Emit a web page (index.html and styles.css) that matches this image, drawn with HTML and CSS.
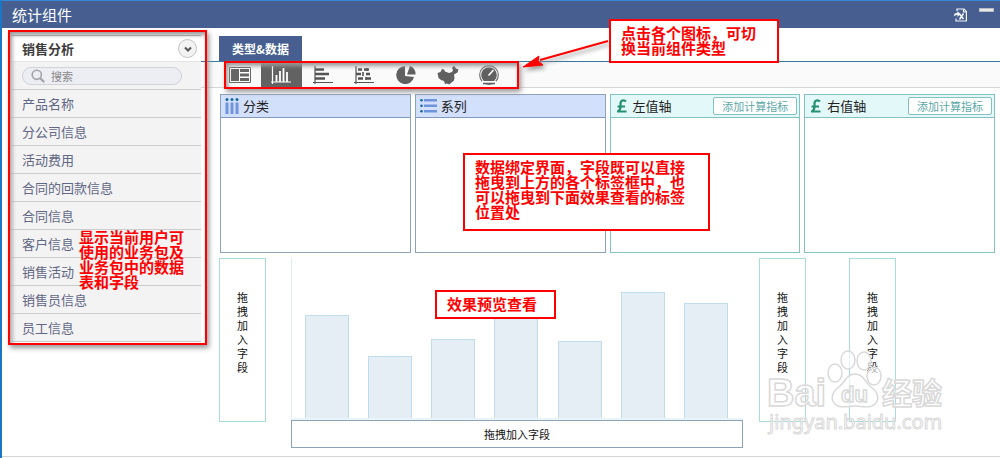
FILE: index.html
```html
<!DOCTYPE html>
<html lang="zh-CN">
<head>
<meta charset="utf-8">
<title>统计组件</title>
<link rel="stylesheet" href="styles.css">
</head>
<body>
<div class="app">
  <header class="titlebar">
    <h1 class="title">统计组件</h1>
    <button class="title-btn" type="button" aria-label="导出">
      <svg width="14" height="14" viewBox="0 0 14 14" fill="none" stroke="#f2f4f8" stroke-width="1.2"><path d="M4 3V1h7l2.400 2.400V13H3v-2.500M10.500 1v3H13"/><path d="M0.800 8.500C1 5.500 2.500 4.800 4.500 4.800V3l3 3-3 3V7C2.800 7 1.800 7.500.8 8.500z" fill="#f2f4f8" stroke="none"/><path d="M6.500 6l4 5M10.500 5.500l-4 6" stroke-width="1.600"/></svg>
    </button>
    <button class="title-btn minimize" type="button" aria-label="最小化"><span class="dash"></span></button>
  </header>

  <div class="workspace">
    <aside class="sidebar">
      <div class="package">
        <h2 class="package-name">销售分析</h2>
        <button class="collapse" type="button" aria-label="展开">
          <svg width="8" height="8" viewBox="0 0 8 8" fill="none" stroke="#555" stroke-width="2"><path d="M1 2.500L4 5.500l3-3"/></svg>
        </button>
      </div>
      <div class="search-row">
        <label class="search">
          <svg width="14" height="14" viewBox="0 0 14 14" fill="none" stroke="#a4a4a8"><circle cx="5.800" cy="5.800" r="4.600" stroke-width="1.600"/><path d="M9.500 9.500l3 3" stroke-width="2.400" stroke-linecap="round"/></svg>
          <input class="search-input" type="text" placeholder="搜索" aria-label="搜索">
        </label>
      </div>
      <ul class="tables">
        <li class="table-item">产品名称</li>
        <li class="table-item">分公司信息</li>
        <li class="table-item">活动费用</li>
        <li class="table-item">合同的回款信息</li>
        <li class="table-item">合同信息</li>
        <li class="table-item">客户信息</li>
        <li class="table-item">销售活动</li>
        <li class="table-item">销售员信息</li>
        <li class="table-item">员工信息</li>
      </ul>
    </aside>

    <main class="main">
      <nav class="tabs"><button class="tab" type="button">类型&amp;数据</button></nav>
      <div class="toolbar">
        <button class="tool" type="button" aria-label="表格">
          <svg width="22" height="20" viewBox="0 0 22 20"><path d="M.5 2.500h21v15H.5z" fill="#fff" stroke="#666"/><path d="M2 4h8v12H2zM11 4h9v3h-9zM11 8.500h9v3h-9zM11 13h9v3h-9z" fill="#666"/></svg>
        </button>
        <button class="tool active" type="button" aria-label="柱状图" aria-pressed="true">
          <svg width="22" height="20" viewBox="0 0 22 20" fill="none" stroke="#fff"><path d="M1 17h20M2.500 1v18" stroke-width="1.200"/><path d="M6.500 10v7M10 6v11M13.500 3v14M17 7v10" stroke-width="1.800"/></svg>
        </button>
        <button class="tool" type="button" aria-label="条形图">
          <svg width="22" height="20" viewBox="0 0 22 20" fill="none" stroke="#555"><path d="M1 17.500h20M3 1v18" stroke-width="1.200"/><path d="M3 4.500h9M3 9h14M3 13.500h10" stroke-width="2.400"/></svg>
        </button>
        <button class="tool" type="button" aria-label="组合图">
          <svg width="22" height="20" viewBox="0 0 22 20" fill="none" stroke="#555"><path d="M1 17.500h20M3 1v18" stroke-width="1.200"/><path d="M5 4.500h4m2 0h5M3 9h5m5 0h4M5 13.500h5m3 0h5" stroke-width="2.600"/><path d="M10 7v4M14 3v3M13 12v3" stroke-width="1.600"/></svg>
        </button>
        <button class="tool" type="button" aria-label="饼图">
          <svg width="22" height="20" viewBox="0 0 22 20" fill="#606060"><path d="M10 1a9 9 0 1 0 9 11l-9-1z"/><path d="M12 9.500L15 .8a9 9 0 0 1 5.500 8.700z"/></svg>
        </button>
        <button class="tool" type="button" aria-label="地图">
          <svg width="22" height="20" viewBox="0 0 22 20" fill="#606060"><path d="M.5 8l3-1 1.500-3 2 .5 1 2 4 1.500 3-1 1-2-1-2 2-2.500 2 3 2.500 1-1 3-3.500 2 .5 3-.5 3-3 2.500-2 1.500-2-1-2 .5-1-3-3-1-2.500-2z"/></svg>
        </button>
        <button class="tool" type="button" aria-label="仪表盘">
          <svg width="22" height="20" viewBox="0 0 22 20"><circle cx="11" cy="10" r="9.300" fill="#fff" stroke="#707070" stroke-width="1.200"/><circle cx="11" cy="10" r="7.800" fill="#606060"/><path d="M10.500 10.500l5-5.500" stroke="#fff" stroke-width="1.600"/><path d="M4 17.500h14" stroke="#fff" stroke-width="3"/><path d="M5 18.500h12" stroke="#606060" stroke-width="1.600"/></svg>
        </button>
      </div>

      <section class="fields">
        <div class="field">
          <div class="field-head">
            <svg width="14" height="18" viewBox="0 0 14 18"><path d="M.5 5.500h3V17h-3zM5.500 5.500h3V17h-3zM10.500 5.500h3V17h-3z" fill="#7094dc"/><g fill="#14689c"><circle cx="2" cy="2.500" r="1.500"/><circle cx="7" cy="2.500" r="1.500"/><circle cx="12" cy="2.500" r="1.500"/></g></svg>
            <span>分类</span>
          </div>
        </div>
        <div class="field">
          <div class="field-head">
            <svg width="17" height="18" viewBox="0 0 17 18"><path d="M4 2h13v2.500H4zM4 7.500h13V10H4zM4 13h13v2.500H4z" fill="#7094dc"/><g fill="#14689c"><circle cx="1.500" cy="3.200" r="1.300"/><circle cx="1.500" cy="8.700" r="1.300"/><circle cx="1.500" cy="14.200" r="1.300"/></g></svg>
            <span>系列</span>
          </div>
        </div>
        <div class="field value">
          <div class="field-head">
            <svg class="pound" width="10" height="14" viewBox="0 0 10 14" fill="none" stroke="#259070" stroke-width="2.200"><path d="M9 2.500C7 .5 3.500 1 3.500 4.500c0 3 1 5.500-2.500 8h8.500M.5 7.500H8"/></svg>
            <span>左值轴</span>
            <button class="add" type="button">添加计算指标</button>
          </div>
        </div>
        <div class="field value">
          <div class="field-head">
            <svg class="pound" width="10" height="14" viewBox="0 0 10 14" fill="none" stroke="#259070" stroke-width="2.200"><path d="M9 2.500C7 .5 3.500 1 3.500 4.500c0 3 1 5.500-2.500 8h8.500M.5 7.500H8"/></svg>
            <span>右值轴</span>
            <button class="add" type="button">添加计算指标</button>
          </div>
        </div>
      </section>

      <section class="preview">
        <div class="drop"><span class="drop-text">拖拽加入字段</span></div>
        <div class="chart">
          <div class="plot">
            <div class="bar" style="height:103px"></div>
            <div class="bar" style="height:62px"></div>
            <div class="bar" style="height:79px"></div>
            <div class="bar" style="height:112px"></div>
            <div class="bar" style="height:77px"></div>
            <div class="bar" style="height:126px"></div>
            <div class="bar" style="height:115px"></div>
          </div>
          <div class="drop-x">拖拽加入字段</div>
        </div>
        <div class="drop"><span class="drop-text">拖拽加入字段</span></div>
        <div class="drop second"><span class="drop-text">拖拽加入字段</span></div>
      </section>
    </main>
  </div>

  <svg class="watermark" width="190" height="90" viewBox="0 0 190 90" fill="#fff" fill-opacity=".65" stroke="#d9d9d9" stroke-width="1.500">
    <ellipse cx="72" cy="23" rx="7" ry="9"/>
    <ellipse cx="85" cy="10" rx="7" ry="9"/>
    <ellipse cx="101" cy="11" rx="7" ry="9"/>
    <ellipse cx="111" cy="26" rx="7" ry="9"/>
    <path d="M92 24c-8 0-10 8-16 13-7 5-9 12-4 17 5 5 13 2 20 2s15 3 20-2c5-5 3-12-4-17-6-5-8-13-16-13z"/>
    <text class="wm-bai" x="4" y="56">Bai</text>
    <text class="wm-du" x="78" y="52">du</text>
    <text class="wm-exp" x="119" y="54">经验</text>
    <text class="wm-url" x="6" y="79">jingyan.baidu.com</text>
  </svg>

  <div class="frame frame-side"></div>
  <div class="frame frame-tools"></div>
  <svg class="arrow" width="92" height="36" viewBox="0 0 92 36"><path d="M88 6L20 25" stroke="#f00" stroke-width="2"/><path d="M3 32l16-11-1 5 5 4z" fill="#f00" stroke="#f00"/></svg>
  <p class="note note-side">显示当前用户可<br>使用的业务包及<br>业务包中的数据<br>表和字段</p>
  <p class="note boxed note-type">点击各个图标，可切<br>换当前组件类型</p>
  <p class="note boxed note-bind">数据绑定界面，字段既可以直接<br>拖曳到上方的各个标签框中，也<br>可以拖曳到下面效果查看的标签<br>位置处</p>
  <p class="note boxed note-preview">效果预览查看</p>
</div>
</body>
</html>
```
FILE: styles.css
```css
* { box-sizing: border-box; }

body {
  margin: 0;
  background: #fff;
  color: #222;
  font: 13px/18px "Noto Sans CJK SC", sans-serif;
}

h1, h2, p, ul { margin: 0; padding: 0; }
button { padding: 0; border: 0; background: none; font: inherit; color: inherit; }
svg { display: block; flex: none; }

.app {
  position: relative;
  min-height: 100vh;
  border-top: 1px solid #3a86d6;
  border-left: 2px solid #1b76c6;
}

.titlebar {
  display: flex;
  align-items: center;
  gap: 12px;
  height: 27px;
  padding: 0 6px 0 10px;
  background: #465f90;
  color: #fff;
}
.title { flex: 1; font-size: 15px; font-weight: 400; line-height: 26px; }
.minimize { align-self: flex-start; padding-top: 7px; }
.dash { display: block; width: 15px; height: 4px; background: #e8e8e8; border: 1px solid #b8bcc4; }

.workspace { display: flex; align-items: flex-start; padding-top: 7px; border-bottom: 1px solid #d4d4d4; }

.sidebar {
  flex: none;
  width: 189px;
  margin-left: 10px;
  background: #f3f3f3;
  border-top: 1px solid #aaa;
}
.package {
  display: flex;
  align-items: center;
  justify-content: space-between;
  height: 26px;
  padding: 0 4px 0 10px;
  background: #fff;
  border-bottom: 1px solid #e4e4e4;
}
.package-name { font-size: 13px; color: #3c3c3c; }
.collapse {
  display: grid;
  place-items: center;
  width: 19px;
  height: 19px;
  border: 1px solid #c4c4c4;
  border-radius: 50%;
  background: #f3f3f3;
}
.search-row { height: 28px; padding: 5px 19px 5px 10px; border-bottom: 1px solid #cdcdcd; }
.search {
  display: flex;
  align-items: center;
  gap: 6px;
  height: 18px;
  padding-left: 8px;
  border: 1px solid #d2d3d8;
  border-radius: 9px;
  background: #eceef4;
}
.search-input { flex: 1; min-width: 0; height: 16px; padding: 0; border: 0; background: none; font: 11px/16px "Noto Sans CJK SC", sans-serif; }
.search-input::placeholder { color: #888; }
.tables { list-style: none; }
.table-item {
  height: 28px;
  padding-left: 10px;
  border-bottom: 1px solid #cdcdcd;
  color: #626784;
  line-height: 27px;
}

.main { flex: 1; min-width: 0; }
.tabs { display: flex; padding: 1px 18px 0; border-bottom: 1px solid #34789e; }
.tab { padding: 0 13px; background: #465f90; color: #fff; font-size: 12px; font-weight: 700; line-height: 25px; }
.toolbar {
  display: grid;
  grid-template-columns: repeat(7, 1fr);
  width: 309px;
  height: 26px;
  padding-left: 18px;
}
.toolbar { box-sizing: border-box; width: auto; padding-right: calc(100% - 309px); background: #fafafa; border-bottom: 1px solid #d6d6d6; }
.tool { display: grid; place-items: center; }
.tool.active { background: #626262; }

.fields { display: grid; grid-template-columns: repeat(4, 1fr); gap: 4px; padding: 6px 5px 5px 19px; }
.field { height: 159px; border: 1px solid #8ea3b8; }
.field-head {
  display: flex;
  align-items: center;
  gap: 4px;
  height: 23px;
  padding: 0 2px 0 4px;
  background: #d3e0fb;
  border-bottom: 1px solid #8098bc;
}
.field.value { border-color: #84c2c2; }
.value .field-head { background: #e3f8f8; border-color: #84c2c2; }
.pound { margin: 0 2px; }
.add {
  width: 84px;
  height: 18px;
  margin-left: auto;
  border: 1px solid #84c2c2;
  border-radius: 2px;
  background: #fff;
  color: #5ba8a8;
  font-size: 11px;
  line-height: 16px;
}

.preview { display: flex; align-items: flex-start; padding: 0 104px 8px 18px; }
.drop {
  display: grid;
  place-items: center;
  flex: none;
  width: 47px;
  height: 164px;
  padding-bottom: 16px;
  border: 1px solid #a8dcdc;
}
.drop.second { margin-left: 43px; }
.drop-text { width: 11px; color: #111; font-size: 11px; line-height: 14px; word-break: break-all; }
.chart { flex: 1; margin: 0 16px 0 25px; }
.plot {
  display: flex;
  align-items: flex-end;
  justify-content: space-between;
  height: 162px;
  padding: 0 15px 0 13px;
  border-left: 1px solid #dceef4;
  border-bottom: 2px solid #eaf5f9;
}
.bar { width: 44px; background: #e5eef4; border: 1px solid #c0deea; border-bottom: 0; }
.drop-x { height: 28px; border: 1px solid #8ea3b8; color: #111; font-size: 11px; line-height: 26px; text-align: center; }

/* Callouts lie over the interface they explain */
.frame { position: absolute; border: 2px solid #f00; box-shadow: 2px 3px 5px #999, inset 2px 3px 4px #999; }
.frame-side { left: 6px; top: 29px; width: 199px; height: 315px; }
.frame-tools { left: 222px; top: 60px; width: 295px; height: 28px; }
.arrow { position: absolute; left: 518px; top: 34px; filter: drop-shadow(2px 3px 2px #999); }
.note { position: absolute; color: #f00; font-size: 15px; font-weight: 700; line-height: 15px; white-space: nowrap; }
.boxed { padding: 4px 10px; border: 2px solid #f00; background: #fff; }
.note-side { left: 77px; top: 228px; }
.note-type { left: 607px; top: 18px; width: 170px; height: 44px; }
.note-bind { left: 461px; top: 152px; width: 247px; height: 78px; }
.note-preview { left: 433px; top: 289px; width: 121px; height: 29px; }

.watermark { position: absolute; right: 47px; top: 349px; }
.watermark text { font-family: "Liberation Sans", "Noto Sans CJK SC", sans-serif; font-weight: 700; }
.wm-bai { font-size: 38px; }
.wm-du { font-size: 22px; }
.wm-exp { font-size: 30px; }
.watermark .wm-url { font-family: "Noto Sans", sans-serif; font-size: 20px; font-weight: 400; stroke-width: 1px; }
```
